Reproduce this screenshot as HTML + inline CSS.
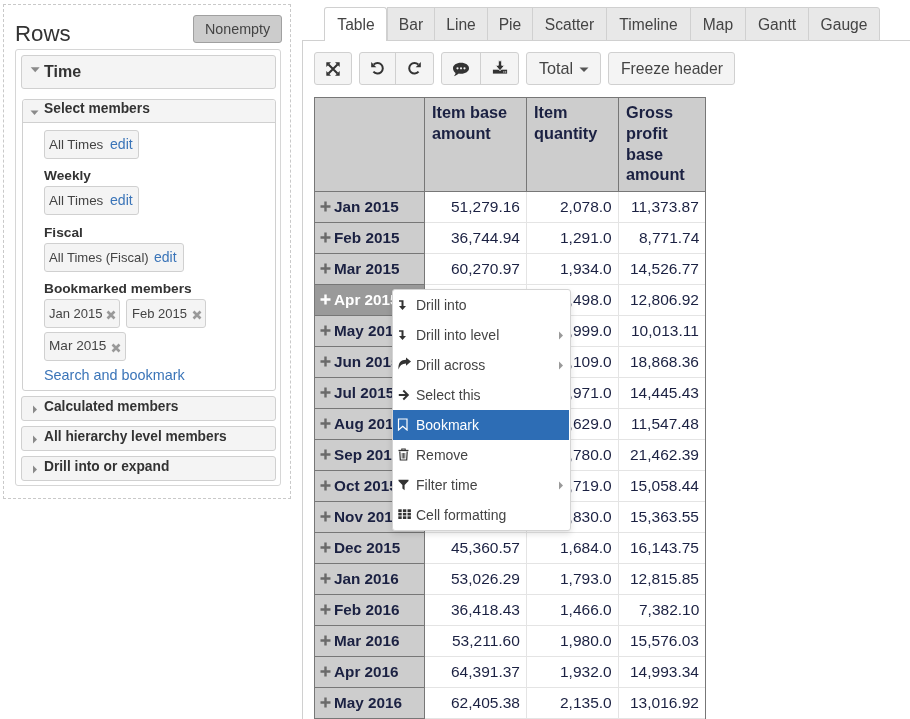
<!DOCTYPE html>
<html><head><meta charset="utf-8">
<style>
*{box-sizing:border-box;margin:0;padding:0}
html,body{width:910px;height:719px;overflow:hidden;background:#fff;font-family:"Liberation Sans",sans-serif;color:#333}
.a{position:absolute}
body>div{will-change:transform}
svg{display:block}
</style></head><body>
<div class="a" style="left:3px;top:4px;width:288px;height:495px;border:1px dashed #c9c9c9"></div>
<div class="a" style="left:14.8px;top:18.77px;font-size:22.3px;line-height:29px;color:#333;white-space:nowrap;">Rows</div>
<div class="a" style="left:193px;top:15px;width:89px;height:28px;background:#cccccc;border:1px solid #a0a0a0;border-radius:3px"></div>
<div class="a" style="left:205.3px;top:19.75px;font-size:14.3px;line-height:19px;color:#444;white-space:nowrap;">Nonempty</div>
<div class="a" style="left:15px;top:49px;width:266px;height:437px;border:1px solid #d6d6d6;border-radius:3px"></div>
<div class="a" style="left:21px;top:55px;width:255px;height:34px;background:#f4f4f4;border:1px solid #d0d0d0;border-radius:3px"></div>
<svg class="a" style="left:30px;top:66px" width="11" height="7"><path d="M0.7 1.3 L9.7 1.3 L5.2 6.3 Z" fill="#8a8a8a"/></svg>
<div class="a" style="left:44px;top:60.96px;font-size:16px;line-height:21px;font-weight:bold;color:#333;white-space:nowrap;">Time</div>
<div class="a" style="left:22px;top:99px;width:254px;height:292px;background:#fff;border:1px solid #d0d0d0;border-radius:3px"></div>
<div class="a" style="left:23px;top:100px;width:252px;height:23px;background:#f4f4f4;border-bottom:1px solid #d0d0d0;border-radius:3px 3px 0 0"></div>
<svg class="a" style="left:30px;top:109px" width="9" height="7"><path d="M0.5 1.5 L8.5 1.5 L4.5 6 Z" fill="#8a8a8a"/></svg>
<div class="a" style="left:43.8px;top:100.02px;font-size:13.8px;line-height:18px;font-weight:bold;color:#333;white-space:nowrap;">Select members</div>
<div class="a" style="left:44px;top:130px;width:95px;height:29px;background:#f4f4f4;border:1px solid #d0d0d0;border-radius:3px"></div>
<div class="a" style="left:49.3px;top:135.66px;font-size:13.4px;line-height:17px;color:#444;white-space:nowrap;">All Times</div>
<div class="a" style="left:109.6px;top:134.91px;font-size:14.1px;line-height:18px;color:#3a74b8;white-space:nowrap;">edit</div>
<div class="a" style="left:44px;top:166.75px;font-size:13.7px;line-height:18px;font-weight:bold;color:#333;white-space:nowrap;">Weekly</div>
<div class="a" style="left:44px;top:186px;width:95px;height:29px;background:#f4f4f4;border:1px solid #d0d0d0;border-radius:3px"></div>
<div class="a" style="left:49.3px;top:191.66px;font-size:13.4px;line-height:17px;color:#444;white-space:nowrap;">All Times</div>
<div class="a" style="left:109.6px;top:190.91px;font-size:14.1px;line-height:18px;color:#3a74b8;white-space:nowrap;">edit</div>
<div class="a" style="left:44px;top:224.25px;font-size:13.7px;line-height:18px;font-weight:bold;color:#333;white-space:nowrap;">Fiscal</div>
<div class="a" style="left:44px;top:243px;width:140px;height:29px;background:#f4f4f4;border:1px solid #d0d0d0;border-radius:3px"></div>
<div class="a" style="left:49.3px;top:248.66px;font-size:13.1px;line-height:17px;color:#444;white-space:nowrap;">All Times (Fiscal)</div>
<div class="a" style="left:154.4px;top:247.85px;font-size:14.0px;line-height:18px;color:#3a74b8;white-space:nowrap;">edit</div>
<div class="a" style="left:44px;top:279.95px;font-size:13.7px;line-height:18px;font-weight:bold;color:#333;white-space:nowrap;">Bookmarked members</div>
<div class="a" style="left:44px;top:299px;width:76px;height:29px;background:#f4f4f4;border:1px solid #d0d0d0;border-radius:3px"></div>
<div class="a" style="left:49.3px;top:304.80px;font-size:13px;line-height:17px;color:#444;white-space:nowrap;">Jan 2015</div>
<svg class="a" style="left:106px;top:309.5px" width="10" height="10"><path d="M1.5 1.5 L8.5 8.5 M8.5 1.5 L1.5 8.5" stroke="#999" stroke-width="2.6" stroke-linecap="butt"/></svg>
<div class="a" style="left:126px;top:299px;width:80px;height:29px;background:#f4f4f4;border:1px solid #d0d0d0;border-radius:3px"></div>
<div class="a" style="left:132px;top:304.80px;font-size:13px;line-height:17px;color:#444;white-space:nowrap;">Feb 2015</div>
<svg class="a" style="left:192px;top:309.5px" width="10" height="10"><path d="M1.5 1.5 L8.5 8.5 M8.5 1.5 L1.5 8.5" stroke="#999" stroke-width="2.6" stroke-linecap="butt"/></svg>
<div class="a" style="left:44px;top:332px;width:82px;height:29px;background:#f4f4f4;border:1px solid #d0d0d0;border-radius:3px"></div>
<div class="a" style="left:49.3px;top:337.29px;font-size:13.6px;line-height:18px;color:#444;white-space:nowrap;">Mar 2015</div>
<svg class="a" style="left:111.2px;top:342.5px" width="10" height="10"><path d="M1.5 1.5 L8.5 8.5 M8.5 1.5 L1.5 8.5" stroke="#999" stroke-width="2.6" stroke-linecap="butt"/></svg>
<div class="a" style="left:43.6px;top:366.01px;font-size:14.4px;line-height:19px;color:#3a74b8;white-space:nowrap;">Search and bookmark</div>
<div class="a" style="left:21px;top:396px;width:255px;height:25px;background:#f4f4f4;border:1px solid #d0d0d0;border-radius:3px"></div>
<svg class="a" style="left:32px;top:405px" width="6" height="9"><path d="M1 0.5 L5 4.5 L1 8.5 Z" fill="#8a8a8a"/></svg>
<div class="a" style="left:44.3px;top:397.64px;font-size:13.75px;line-height:18px;font-weight:bold;color:#333;white-space:nowrap;">Calculated members</div>
<div class="a" style="left:21px;top:426px;width:255px;height:25px;background:#f4f4f4;border:1px solid #d0d0d0;border-radius:3px"></div>
<svg class="a" style="left:32px;top:435px" width="6" height="9"><path d="M1 0.5 L5 4.5 L1 8.5 Z" fill="#8a8a8a"/></svg>
<div class="a" style="left:44.3px;top:427.64px;font-size:13.75px;line-height:18px;font-weight:bold;color:#333;white-space:nowrap;">All hierarchy level members</div>
<div class="a" style="left:21px;top:456px;width:255px;height:25px;background:#f4f4f4;border:1px solid #d0d0d0;border-radius:3px"></div>
<svg class="a" style="left:32px;top:465px" width="6" height="9"><path d="M1 0.5 L5 4.5 L1 8.5 Z" fill="#8a8a8a"/></svg>
<div class="a" style="left:44.3px;top:457.54px;font-size:13.75px;line-height:18px;font-weight:bold;color:#333;white-space:nowrap;">Drill into or expand</div>
<div class="a" style="left:302px;top:40px;width:608px;height:1px;background:#d0d0d0"></div>
<div class="a" style="left:302px;top:40px;width:1px;height:679px;background:#d0d0d0"></div>
<div class="a" style="left:324px;top:7px;width:63px;height:34px;background:#fff;border:1px solid #d0d0d0;border-bottom:none;border-radius:3px 3px 0 0"></div>
<div class="a" style="left:324px;top:14.79px;width:64px;text-align:center;font-size:15.6px;line-height:20px;color:#444">Table</div>
<div class="a" style="left:387px;top:7px;width:48px;height:34px;background:#e8e8e8;border:1px solid #d0d0d0;"></div>
<div class="a" style="left:387px;top:14.79px;width:48px;text-align:center;font-size:15.6px;line-height:20px;color:#444">Bar</div>
<div class="a" style="left:434px;top:7px;width:54px;height:34px;background:#e8e8e8;border:1px solid #d0d0d0;"></div>
<div class="a" style="left:434px;top:14.79px;width:54px;text-align:center;font-size:15.6px;line-height:20px;color:#444">Line</div>
<div class="a" style="left:487px;top:7px;width:46px;height:34px;background:#e8e8e8;border:1px solid #d0d0d0;"></div>
<div class="a" style="left:487px;top:14.79px;width:46px;text-align:center;font-size:15.6px;line-height:20px;color:#444">Pie</div>
<div class="a" style="left:532px;top:7px;width:75px;height:34px;background:#e8e8e8;border:1px solid #d0d0d0;"></div>
<div class="a" style="left:532px;top:14.79px;width:75px;text-align:center;font-size:15.6px;line-height:20px;color:#444">Scatter</div>
<div class="a" style="left:606px;top:7px;width:85px;height:34px;background:#e8e8e8;border:1px solid #d0d0d0;"></div>
<div class="a" style="left:606px;top:14.79px;width:85px;text-align:center;font-size:15.6px;line-height:20px;color:#444">Timeline</div>
<div class="a" style="left:690px;top:7px;width:56px;height:34px;background:#e8e8e8;border:1px solid #d0d0d0;"></div>
<div class="a" style="left:690px;top:14.79px;width:56px;text-align:center;font-size:15.6px;line-height:20px;color:#444">Map</div>
<div class="a" style="left:745px;top:7px;width:64px;height:34px;background:#e8e8e8;border:1px solid #d0d0d0;"></div>
<div class="a" style="left:745px;top:14.79px;width:64px;text-align:center;font-size:15.6px;line-height:20px;color:#444">Gantt</div>
<div class="a" style="left:808px;top:7px;width:72px;height:34px;background:#e8e8e8;border:1px solid #d0d0d0;border-radius:0 3px 0 0;"></div>
<div class="a" style="left:808px;top:14.79px;width:72px;text-align:center;font-size:15.6px;line-height:20px;color:#444">Gauge</div>
<div class="a" style="left:314px;top:52px;width:38px;height:33px;background:#f4f4f4;border:1px solid #d0d0d0;border-radius:3px"></div>
<div class="a" style="left:359px;top:52px;width:75px;height:33px;background:#f4f4f4;border:1px solid #d0d0d0;border-radius:3px"></div>
<div class="a" style="left:395px;top:53px;width:1px;height:31px;background:#d0d0d0"></div>
<div class="a" style="left:441px;top:52px;width:78px;height:33px;background:#f4f4f4;border:1px solid #d0d0d0;border-radius:3px"></div>
<div class="a" style="left:480px;top:53px;width:1px;height:31px;background:#d0d0d0"></div>
<div class="a" style="left:526px;top:52px;width:75px;height:33px;background:#f4f4f4;border:1px solid #d0d0d0;border-radius:3px"></div>
<div class="a" style="left:608px;top:52px;width:127px;height:33px;background:#f4f4f4;border:1px solid #d0d0d0;border-radius:3px"></div>
<div class="a" style="left:539.3px;top:58.09px;font-size:16.2px;line-height:21px;color:#444;white-space:nowrap;">Total</div>
<svg class="a" style="left:579px;top:67px" width="11" height="6"><path d="M0.5 0.5 L9.5 0.5 L5 5 Z" fill="#555"/></svg>
<div class="a" style="left:620.8px;top:58.76px;font-size:15.7px;line-height:20px;color:#444;white-space:nowrap;">Freeze header</div>
<svg class="a" style="left:326px;top:61.5px" width="14" height="14" viewBox="0 0 14 14"><g fill="#333">
<path d="M2.5 2.5 L11.5 11.5 M11.5 2.5 L2.5 11.5" stroke="#333" stroke-width="2.1"/>
<path d="M0.3 0.3 H5 L0.3 5 Z"/><path d="M13.7 0.3 V5 L9 0.3 Z"/><path d="M0.3 13.7 V9 L5 13.7 Z"/><path d="M13.7 13.7 H9 L13.7 9 Z"/></g></svg>
<svg class="a" style="left:370px;top:61px" width="15" height="15" viewBox="0 0 15 15"><path d="M3.75 3.55 A5.3 5.3 0 1 1 3.44 10.71" fill="none" stroke="#333" stroke-width="2"/><path d="M1.2 1 L6.3 6.2 L1.2 6.2 Z" fill="#333"/></svg>
<svg class="a" style="left:407px;top:61px" width="15" height="15" viewBox="0 0 15 15"><path d="M11.25 3.55 A5.3 5.3 0 1 0 11.56 10.71" fill="none" stroke="#333" stroke-width="2"/><path d="M13.8 1 L8.7 6.2 L13.8 6.2 Z" fill="#333"/></svg>
<svg class="a" style="left:452px;top:62px" width="18" height="15" viewBox="0 0 18 15"><path d="M9 0.8 C13.6 0.8 17 3.2 17 6.3 C17 9.4 13.6 11.8 9 11.8 C8.2 11.8 7.5 11.7 6.8 11.6 C5.6 12.8 3.8 13.8 1.8 14.2 C2.8 13.2 3.4 12.2 3.5 10.9 C1.9 9.8 1 8.2 1 6.3 C1 3.2 4.4 0.8 9 0.8 Z" fill="#333"/><circle cx="5.5" cy="6.3" r="1.1" fill="#f4f4f4"/><circle cx="9" cy="6.3" r="1.1" fill="#f4f4f4"/><circle cx="12.5" cy="6.3" r="1.1" fill="#f4f4f4"/></svg>
<svg class="a" style="left:492px;top:60px" width="16" height="15" viewBox="0 0 16 15"><rect x="0.9" y="9.7" width="14.2" height="3.9" fill="#333"/><path d="M6.3 0.8 H9.7 V5.3 H12.6 L8 10.8 L3.4 5.3 H6.3 Z" fill="#333" stroke="#f4f4f4" stroke-width="0.9"/><rect x="11.3" y="11.4" width="1.1" height="1.1" fill="#f4f4f4"/><rect x="13.1" y="11.4" width="1.1" height="1.1" fill="#f4f4f4"/></svg>
<div class="a" style="left:314px;top:97px;width:392px;height:94px;background:#cdcdcd"></div>
<div class="a" style="left:314px;top:191px;width:110px;height:528px;background:#cdcdcd"></div>
<div class="a" style="left:314px;top:284px;width:110px;height:31px;background:#9a9a9a"></div>
<div class="a" style="left:424px;top:222px;width:281px;height:1px;background:#e4e4e4"></div>
<div class="a" style="left:314px;top:222px;width:110px;height:1px;background:#777"></div>
<div class="a" style="left:424px;top:253px;width:281px;height:1px;background:#e4e4e4"></div>
<div class="a" style="left:314px;top:253px;width:110px;height:1px;background:#777"></div>
<div class="a" style="left:424px;top:284px;width:281px;height:1px;background:#e4e4e4"></div>
<div class="a" style="left:314px;top:284px;width:110px;height:1px;background:#777"></div>
<div class="a" style="left:424px;top:315px;width:281px;height:1px;background:#e4e4e4"></div>
<div class="a" style="left:314px;top:315px;width:110px;height:1px;background:#777"></div>
<div class="a" style="left:424px;top:346px;width:281px;height:1px;background:#e4e4e4"></div>
<div class="a" style="left:314px;top:346px;width:110px;height:1px;background:#777"></div>
<div class="a" style="left:424px;top:377px;width:281px;height:1px;background:#e4e4e4"></div>
<div class="a" style="left:314px;top:377px;width:110px;height:1px;background:#777"></div>
<div class="a" style="left:424px;top:408px;width:281px;height:1px;background:#e4e4e4"></div>
<div class="a" style="left:314px;top:408px;width:110px;height:1px;background:#777"></div>
<div class="a" style="left:424px;top:439px;width:281px;height:1px;background:#e4e4e4"></div>
<div class="a" style="left:314px;top:439px;width:110px;height:1px;background:#777"></div>
<div class="a" style="left:424px;top:470px;width:281px;height:1px;background:#e4e4e4"></div>
<div class="a" style="left:314px;top:470px;width:110px;height:1px;background:#777"></div>
<div class="a" style="left:424px;top:501px;width:281px;height:1px;background:#e4e4e4"></div>
<div class="a" style="left:314px;top:501px;width:110px;height:1px;background:#777"></div>
<div class="a" style="left:424px;top:532px;width:281px;height:1px;background:#e4e4e4"></div>
<div class="a" style="left:314px;top:532px;width:110px;height:1px;background:#777"></div>
<div class="a" style="left:424px;top:563px;width:281px;height:1px;background:#e4e4e4"></div>
<div class="a" style="left:314px;top:563px;width:110px;height:1px;background:#777"></div>
<div class="a" style="left:424px;top:594px;width:281px;height:1px;background:#e4e4e4"></div>
<div class="a" style="left:314px;top:594px;width:110px;height:1px;background:#777"></div>
<div class="a" style="left:424px;top:625px;width:281px;height:1px;background:#e4e4e4"></div>
<div class="a" style="left:314px;top:625px;width:110px;height:1px;background:#777"></div>
<div class="a" style="left:424px;top:656px;width:281px;height:1px;background:#e4e4e4"></div>
<div class="a" style="left:314px;top:656px;width:110px;height:1px;background:#777"></div>
<div class="a" style="left:424px;top:687px;width:281px;height:1px;background:#e4e4e4"></div>
<div class="a" style="left:314px;top:687px;width:110px;height:1px;background:#777"></div>
<div class="a" style="left:424px;top:718px;width:281px;height:1px;background:#e4e4e4"></div>
<div class="a" style="left:314px;top:718px;width:110px;height:1px;background:#777"></div>
<div class="a" style="left:526px;top:191px;width:1px;height:528px;background:#e4e4e4"></div>
<div class="a" style="left:526px;top:97px;width:1px;height:94px;background:#777"></div>
<div class="a" style="left:618px;top:191px;width:1px;height:528px;background:#e4e4e4"></div>
<div class="a" style="left:618px;top:97px;width:1px;height:94px;background:#777"></div>
<div class="a" style="left:314px;top:97px;width:392px;height:1px;background:#777"></div>
<div class="a" style="left:314px;top:191px;width:392px;height:1px;background:#777"></div>
<div class="a" style="left:314px;top:97px;width:1px;height:622px;background:#777"></div>
<div class="a" style="left:424px;top:97px;width:1px;height:622px;background:#777"></div>
<div class="a" style="left:705px;top:97px;width:1px;height:622px;background:#777"></div>
<div class="a" style="left:431.5px;top:101.75px;font-size:16.3px;line-height:21px;font-weight:bold;color:#1b2142;white-space:nowrap;">Item base</div>
<div class="a" style="left:431.5px;top:122.65px;font-size:16.3px;line-height:21px;font-weight:bold;color:#1b2142;white-space:nowrap;">amount</div>
<div class="a" style="left:533.5px;top:101.75px;font-size:16.3px;line-height:21px;font-weight:bold;color:#1b2142;white-space:nowrap;">Item</div>
<div class="a" style="left:533.5px;top:122.65px;font-size:16.3px;line-height:21px;font-weight:bold;color:#1b2142;white-space:nowrap;">quantity</div>
<div class="a" style="left:625.5px;top:101.75px;font-size:16.3px;line-height:21px;font-weight:bold;color:#1b2142;white-space:nowrap;">Gross</div>
<div class="a" style="left:625.5px;top:122.65px;font-size:16.3px;line-height:21px;font-weight:bold;color:#1b2142;white-space:nowrap;">profit</div>
<div class="a" style="left:625.5px;top:143.55px;font-size:16.3px;line-height:21px;font-weight:bold;color:#1b2142;white-space:nowrap;">base</div>
<div class="a" style="left:625.5px;top:164.45px;font-size:16.3px;line-height:21px;font-weight:bold;color:#1b2142;white-space:nowrap;">amount</div>
<svg class="a" style="left:320px;top:201px" width="11" height="11"><path d="M5.5 0.5 V10.5 M0.5 5.5 H10.5" stroke="#6a6a6a" stroke-width="2.4"/></svg>
<div class="a" style="left:333.5px;top:196.70px;font-size:15.3px;line-height:20px;font-weight:bold;color:#1b2142;white-space:nowrap;">Jan 2015</div>
<div class="a" style="right:390px;text-align:right;top:196.83px;font-size:15.5px;line-height:20px;color:#1b2142;white-space:nowrap;">51,279.16</div>
<div class="a" style="right:298px;text-align:right;top:196.83px;font-size:15.5px;line-height:20px;color:#1b2142;white-space:nowrap;">2,078.0</div>
<div class="a" style="right:211px;text-align:right;top:196.83px;font-size:15.5px;line-height:20px;color:#1b2142;white-space:nowrap;">11,373.87</div>
<svg class="a" style="left:320px;top:232px" width="11" height="11"><path d="M5.5 0.5 V10.5 M0.5 5.5 H10.5" stroke="#6a6a6a" stroke-width="2.4"/></svg>
<div class="a" style="left:333.5px;top:227.70px;font-size:15.3px;line-height:20px;font-weight:bold;color:#1b2142;white-space:nowrap;">Feb 2015</div>
<div class="a" style="right:390px;text-align:right;top:227.83px;font-size:15.5px;line-height:20px;color:#1b2142;white-space:nowrap;">36,744.94</div>
<div class="a" style="right:298px;text-align:right;top:227.83px;font-size:15.5px;line-height:20px;color:#1b2142;white-space:nowrap;">1,291.0</div>
<div class="a" style="right:211px;text-align:right;top:227.83px;font-size:15.5px;line-height:20px;color:#1b2142;white-space:nowrap;">8,771.74</div>
<svg class="a" style="left:320px;top:263px" width="11" height="11"><path d="M5.5 0.5 V10.5 M0.5 5.5 H10.5" stroke="#6a6a6a" stroke-width="2.4"/></svg>
<div class="a" style="left:333.5px;top:258.70px;font-size:15.3px;line-height:20px;font-weight:bold;color:#1b2142;white-space:nowrap;">Mar 2015</div>
<div class="a" style="right:390px;text-align:right;top:258.83px;font-size:15.5px;line-height:20px;color:#1b2142;white-space:nowrap;">60,270.97</div>
<div class="a" style="right:298px;text-align:right;top:258.83px;font-size:15.5px;line-height:20px;color:#1b2142;white-space:nowrap;">1,934.0</div>
<div class="a" style="right:211px;text-align:right;top:258.83px;font-size:15.5px;line-height:20px;color:#1b2142;white-space:nowrap;">14,526.77</div>
<svg class="a" style="left:320px;top:294px" width="11" height="11"><path d="M5.5 0.5 V10.5 M0.5 5.5 H10.5" stroke="#fff" stroke-width="2.4"/></svg>
<div class="a" style="left:333.5px;top:289.70px;font-size:15.3px;line-height:20px;font-weight:bold;color:#fff;white-space:nowrap;">Apr 2015</div>
<div class="a" style="right:390px;text-align:right;top:289.83px;font-size:15.5px;line-height:20px;color:#1b2142;white-space:nowrap;">48,112.40</div>
<div class="a" style="right:298px;text-align:right;top:289.83px;font-size:15.5px;line-height:20px;color:#1b2142;white-space:nowrap;">1,498.0</div>
<div class="a" style="right:211px;text-align:right;top:289.83px;font-size:15.5px;line-height:20px;color:#1b2142;white-space:nowrap;">12,806.92</div>
<svg class="a" style="left:320px;top:325px" width="11" height="11"><path d="M5.5 0.5 V10.5 M0.5 5.5 H10.5" stroke="#6a6a6a" stroke-width="2.4"/></svg>
<div class="a" style="left:333.5px;top:320.70px;font-size:15.3px;line-height:20px;font-weight:bold;color:#1b2142;white-space:nowrap;">May 2015</div>
<div class="a" style="right:390px;text-align:right;top:320.83px;font-size:15.5px;line-height:20px;color:#1b2142;white-space:nowrap;">41,220.18</div>
<div class="a" style="right:298px;text-align:right;top:320.83px;font-size:15.5px;line-height:20px;color:#1b2142;white-space:nowrap;">1,999.0</div>
<div class="a" style="right:211px;text-align:right;top:320.83px;font-size:15.5px;line-height:20px;color:#1b2142;white-space:nowrap;">10,013.11</div>
<svg class="a" style="left:320px;top:356px" width="11" height="11"><path d="M5.5 0.5 V10.5 M0.5 5.5 H10.5" stroke="#6a6a6a" stroke-width="2.4"/></svg>
<div class="a" style="left:333.5px;top:351.70px;font-size:15.3px;line-height:20px;font-weight:bold;color:#1b2142;white-space:nowrap;">Jun 2015</div>
<div class="a" style="right:390px;text-align:right;top:351.83px;font-size:15.5px;line-height:20px;color:#1b2142;white-space:nowrap;">66,310.25</div>
<div class="a" style="right:298px;text-align:right;top:351.83px;font-size:15.5px;line-height:20px;color:#1b2142;white-space:nowrap;">2,109.0</div>
<div class="a" style="right:211px;text-align:right;top:351.83px;font-size:15.5px;line-height:20px;color:#1b2142;white-space:nowrap;">18,868.36</div>
<svg class="a" style="left:320px;top:387px" width="11" height="11"><path d="M5.5 0.5 V10.5 M0.5 5.5 H10.5" stroke="#6a6a6a" stroke-width="2.4"/></svg>
<div class="a" style="left:333.5px;top:382.70px;font-size:15.3px;line-height:20px;font-weight:bold;color:#1b2142;white-space:nowrap;">Jul 2015</div>
<div class="a" style="right:390px;text-align:right;top:382.83px;font-size:15.5px;line-height:20px;color:#1b2142;white-space:nowrap;">52,871.09</div>
<div class="a" style="right:298px;text-align:right;top:382.83px;font-size:15.5px;line-height:20px;color:#1b2142;white-space:nowrap;">1,971.0</div>
<div class="a" style="right:211px;text-align:right;top:382.83px;font-size:15.5px;line-height:20px;color:#1b2142;white-space:nowrap;">14,445.43</div>
<svg class="a" style="left:320px;top:418px" width="11" height="11"><path d="M5.5 0.5 V10.5 M0.5 5.5 H10.5" stroke="#6a6a6a" stroke-width="2.4"/></svg>
<div class="a" style="left:333.5px;top:413.70px;font-size:15.3px;line-height:20px;font-weight:bold;color:#1b2142;white-space:nowrap;">Aug 2015</div>
<div class="a" style="right:390px;text-align:right;top:413.83px;font-size:15.5px;line-height:20px;color:#1b2142;white-space:nowrap;">47,932.61</div>
<div class="a" style="right:298px;text-align:right;top:413.83px;font-size:15.5px;line-height:20px;color:#1b2142;white-space:nowrap;">1,629.0</div>
<div class="a" style="right:211px;text-align:right;top:413.83px;font-size:15.5px;line-height:20px;color:#1b2142;white-space:nowrap;">11,547.48</div>
<svg class="a" style="left:320px;top:449px" width="11" height="11"><path d="M5.5 0.5 V10.5 M0.5 5.5 H10.5" stroke="#6a6a6a" stroke-width="2.4"/></svg>
<div class="a" style="left:333.5px;top:444.70px;font-size:15.3px;line-height:20px;font-weight:bold;color:#1b2142;white-space:nowrap;">Sep 2015</div>
<div class="a" style="right:390px;text-align:right;top:444.83px;font-size:15.5px;line-height:20px;color:#1b2142;white-space:nowrap;">70,118.84</div>
<div class="a" style="right:298px;text-align:right;top:444.83px;font-size:15.5px;line-height:20px;color:#1b2142;white-space:nowrap;">2,780.0</div>
<div class="a" style="right:211px;text-align:right;top:444.83px;font-size:15.5px;line-height:20px;color:#1b2142;white-space:nowrap;">21,462.39</div>
<svg class="a" style="left:320px;top:480px" width="11" height="11"><path d="M5.5 0.5 V10.5 M0.5 5.5 H10.5" stroke="#6a6a6a" stroke-width="2.4"/></svg>
<div class="a" style="left:333.5px;top:475.70px;font-size:15.3px;line-height:20px;font-weight:bold;color:#1b2142;white-space:nowrap;">Oct 2015</div>
<div class="a" style="right:390px;text-align:right;top:475.83px;font-size:15.5px;line-height:20px;color:#1b2142;white-space:nowrap;">55,406.12</div>
<div class="a" style="right:298px;text-align:right;top:475.83px;font-size:15.5px;line-height:20px;color:#1b2142;white-space:nowrap;">1,719.0</div>
<div class="a" style="right:211px;text-align:right;top:475.83px;font-size:15.5px;line-height:20px;color:#1b2142;white-space:nowrap;">15,058.44</div>
<svg class="a" style="left:320px;top:511px" width="11" height="11"><path d="M5.5 0.5 V10.5 M0.5 5.5 H10.5" stroke="#6a6a6a" stroke-width="2.4"/></svg>
<div class="a" style="left:333.5px;top:506.70px;font-size:15.3px;line-height:20px;font-weight:bold;color:#1b2142;white-space:nowrap;">Nov 2015</div>
<div class="a" style="right:390px;text-align:right;top:506.83px;font-size:15.5px;line-height:20px;color:#1b2142;white-space:nowrap;">58,730.55</div>
<div class="a" style="right:298px;text-align:right;top:506.83px;font-size:15.5px;line-height:20px;color:#1b2142;white-space:nowrap;">1,830.0</div>
<div class="a" style="right:211px;text-align:right;top:506.83px;font-size:15.5px;line-height:20px;color:#1b2142;white-space:nowrap;">15,363.55</div>
<svg class="a" style="left:320px;top:542px" width="11" height="11"><path d="M5.5 0.5 V10.5 M0.5 5.5 H10.5" stroke="#6a6a6a" stroke-width="2.4"/></svg>
<div class="a" style="left:333.5px;top:537.70px;font-size:15.3px;line-height:20px;font-weight:bold;color:#1b2142;white-space:nowrap;">Dec 2015</div>
<div class="a" style="right:390px;text-align:right;top:537.83px;font-size:15.5px;line-height:20px;color:#1b2142;white-space:nowrap;">45,360.57</div>
<div class="a" style="right:298px;text-align:right;top:537.83px;font-size:15.5px;line-height:20px;color:#1b2142;white-space:nowrap;">1,684.0</div>
<div class="a" style="right:211px;text-align:right;top:537.83px;font-size:15.5px;line-height:20px;color:#1b2142;white-space:nowrap;">16,143.75</div>
<svg class="a" style="left:320px;top:573px" width="11" height="11"><path d="M5.5 0.5 V10.5 M0.5 5.5 H10.5" stroke="#6a6a6a" stroke-width="2.4"/></svg>
<div class="a" style="left:333.5px;top:568.70px;font-size:15.3px;line-height:20px;font-weight:bold;color:#1b2142;white-space:nowrap;">Jan 2016</div>
<div class="a" style="right:390px;text-align:right;top:568.83px;font-size:15.5px;line-height:20px;color:#1b2142;white-space:nowrap;">53,026.29</div>
<div class="a" style="right:298px;text-align:right;top:568.83px;font-size:15.5px;line-height:20px;color:#1b2142;white-space:nowrap;">1,793.0</div>
<div class="a" style="right:211px;text-align:right;top:568.83px;font-size:15.5px;line-height:20px;color:#1b2142;white-space:nowrap;">12,815.85</div>
<svg class="a" style="left:320px;top:604px" width="11" height="11"><path d="M5.5 0.5 V10.5 M0.5 5.5 H10.5" stroke="#6a6a6a" stroke-width="2.4"/></svg>
<div class="a" style="left:333.5px;top:599.70px;font-size:15.3px;line-height:20px;font-weight:bold;color:#1b2142;white-space:nowrap;">Feb 2016</div>
<div class="a" style="right:390px;text-align:right;top:599.83px;font-size:15.5px;line-height:20px;color:#1b2142;white-space:nowrap;">36,418.43</div>
<div class="a" style="right:298px;text-align:right;top:599.83px;font-size:15.5px;line-height:20px;color:#1b2142;white-space:nowrap;">1,466.0</div>
<div class="a" style="right:211px;text-align:right;top:599.83px;font-size:15.5px;line-height:20px;color:#1b2142;white-space:nowrap;">7,382.10</div>
<svg class="a" style="left:320px;top:635px" width="11" height="11"><path d="M5.5 0.5 V10.5 M0.5 5.5 H10.5" stroke="#6a6a6a" stroke-width="2.4"/></svg>
<div class="a" style="left:333.5px;top:630.70px;font-size:15.3px;line-height:20px;font-weight:bold;color:#1b2142;white-space:nowrap;">Mar 2016</div>
<div class="a" style="right:390px;text-align:right;top:630.83px;font-size:15.5px;line-height:20px;color:#1b2142;white-space:nowrap;">53,211.60</div>
<div class="a" style="right:298px;text-align:right;top:630.83px;font-size:15.5px;line-height:20px;color:#1b2142;white-space:nowrap;">1,980.0</div>
<div class="a" style="right:211px;text-align:right;top:630.83px;font-size:15.5px;line-height:20px;color:#1b2142;white-space:nowrap;">15,576.03</div>
<svg class="a" style="left:320px;top:666px" width="11" height="11"><path d="M5.5 0.5 V10.5 M0.5 5.5 H10.5" stroke="#6a6a6a" stroke-width="2.4"/></svg>
<div class="a" style="left:333.5px;top:661.70px;font-size:15.3px;line-height:20px;font-weight:bold;color:#1b2142;white-space:nowrap;">Apr 2016</div>
<div class="a" style="right:390px;text-align:right;top:661.83px;font-size:15.5px;line-height:20px;color:#1b2142;white-space:nowrap;">64,391.37</div>
<div class="a" style="right:298px;text-align:right;top:661.83px;font-size:15.5px;line-height:20px;color:#1b2142;white-space:nowrap;">1,932.0</div>
<div class="a" style="right:211px;text-align:right;top:661.83px;font-size:15.5px;line-height:20px;color:#1b2142;white-space:nowrap;">14,993.34</div>
<svg class="a" style="left:320px;top:697px" width="11" height="11"><path d="M5.5 0.5 V10.5 M0.5 5.5 H10.5" stroke="#6a6a6a" stroke-width="2.4"/></svg>
<div class="a" style="left:333.5px;top:692.70px;font-size:15.3px;line-height:20px;font-weight:bold;color:#1b2142;white-space:nowrap;">May 2016</div>
<div class="a" style="right:390px;text-align:right;top:692.83px;font-size:15.5px;line-height:20px;color:#1b2142;white-space:nowrap;">62,405.38</div>
<div class="a" style="right:298px;text-align:right;top:692.83px;font-size:15.5px;line-height:20px;color:#1b2142;white-space:nowrap;">2,135.0</div>
<div class="a" style="right:211px;text-align:right;top:692.83px;font-size:15.5px;line-height:20px;color:#1b2142;white-space:nowrap;">13,016.92</div>
<div class="a" style="left:392px;top:289px;width:179px;height:242px;background:#fff;border:1px solid #d4d4d4;border-radius:3px;box-shadow:0 3px 6px rgba(0,0,0,0.12)"></div>
<div class="a" style="left:393px;top:410px;width:176px;height:30px;background:#2d6db5"></div>
<div class="a" style="left:415.6px;top:295.95px;font-size:14px;line-height:18px;color:#444;white-space:nowrap;">Drill into</div>
<div class="a" style="left:415.6px;top:325.95px;font-size:14px;line-height:18px;color:#444;white-space:nowrap;">Drill into level</div>
<div class="a" style="left:415.6px;top:355.95px;font-size:14px;line-height:18px;color:#444;white-space:nowrap;">Drill across</div>
<div class="a" style="left:415.6px;top:385.95px;font-size:14px;line-height:18px;color:#444;white-space:nowrap;">Select this</div>
<div class="a" style="left:415.6px;top:415.95px;font-size:14px;line-height:18px;color:#fff;white-space:nowrap;">Bookmark</div>
<div class="a" style="left:415.6px;top:445.95px;font-size:14px;line-height:18px;color:#444;white-space:nowrap;">Remove</div>
<div class="a" style="left:415.6px;top:475.95px;font-size:14px;line-height:18px;color:#444;white-space:nowrap;">Filter time</div>
<div class="a" style="left:415.6px;top:505.95px;font-size:14px;line-height:18px;color:#444;white-space:nowrap;">Cell formatting</div>
<svg class="a" style="left:397.5px;top:299px" width="10" height="12"><path d="M1 1.3 H5.5 V7 H8 L4.5 11 L1 7 H3.5 V2.8 H1 Z" fill="#333"/></svg>
<svg class="a" style="left:397.5px;top:329px" width="10" height="12"><path d="M1 1.3 H5.5 V7 H8 L4.5 11 L1 7 H3.5 V2.8 H1 Z" fill="#333"/></svg>
<svg class="a" style="left:397px;top:357px" width="15" height="14" viewBox="0 0 15 14"><path d="M14 4.5 L9 0.5 V2.8 C4 2.8 1 5.5 1.5 12.5 C2.5 8.5 5 6.5 9 6.5 V8.8 Z" fill="#333"/></svg>
<svg class="a" style="left:397.5px;top:388.5px" width="12" height="12" viewBox="0 0 12 12"><path d="M6 0.8 L11.2 6 L6 11.2 L4.6 9.8 L7.4 7 H0.8 V5 H7.4 L4.6 2.2 Z" fill="#333"/></svg>
<svg class="a" style="left:397px;top:417.5px" width="12" height="13" viewBox="0 0 12 13"><path d="M1.5 1 H10 V12 L5.75 8.2 L1.5 12 Z" fill="none" stroke="#fff" stroke-width="1.2"/></svg>
<svg class="a" style="left:397.5px;top:447.5px" width="11" height="13" viewBox="0 0 11 13"><path d="M0.5 2.5 H10.5" stroke="#333" stroke-width="1.3"/><path d="M3.8 2.3 V1 H7.2 V2.3" fill="none" stroke="#333" stroke-width="1.1"/><path d="M1.8 3.5 L2.3 12 H8.7 L9.2 3.5" fill="none" stroke="#333" stroke-width="1.2"/><path d="M4.2 5 V10.5 M5.5 5 V10.5 M6.8 5 V10.5" stroke="#333" stroke-width="0.8"/></svg>
<svg class="a" style="left:397.5px;top:478.5px" width="11" height="12" viewBox="0 0 11 12"><path d="M0.5 0.8 H10.5 V2 L6.6 6 V11.2 L4.4 9.6 V6 L0.5 2 Z" fill="#333"/></svg>
<svg class="a" style="left:398px;top:508.5px" width="14" height="11"><rect x="0.3" y="0.3" width="3.4" height="2.7" fill="#333"/><rect x="4.8999999999999995" y="0.3" width="3.4" height="2.7" fill="#333"/><rect x="9.5" y="0.3" width="3.4" height="2.7" fill="#333"/><rect x="0.3" y="3.8" width="3.4" height="2.7" fill="#333"/><rect x="4.8999999999999995" y="3.8" width="3.4" height="2.7" fill="#333"/><rect x="9.5" y="3.8" width="3.4" height="2.7" fill="#333"/><rect x="0.3" y="7.3" width="3.4" height="2.7" fill="#333"/><rect x="4.8999999999999995" y="7.3" width="3.4" height="2.7" fill="#333"/><rect x="9.5" y="7.3" width="3.4" height="2.7" fill="#333"/></svg>
<svg class="a" style="left:558px;top:330.5px" width="6" height="9"><path d="M1 0.5 L5 4.5 L1 8.5 Z" fill="#999"/></svg>
<svg class="a" style="left:558px;top:360.5px" width="6" height="9"><path d="M1 0.5 L5 4.5 L1 8.5 Z" fill="#999"/></svg>
<svg class="a" style="left:558px;top:480.5px" width="6" height="9"><path d="M1 0.5 L5 4.5 L1 8.5 Z" fill="#999"/></svg>
</body></html>
